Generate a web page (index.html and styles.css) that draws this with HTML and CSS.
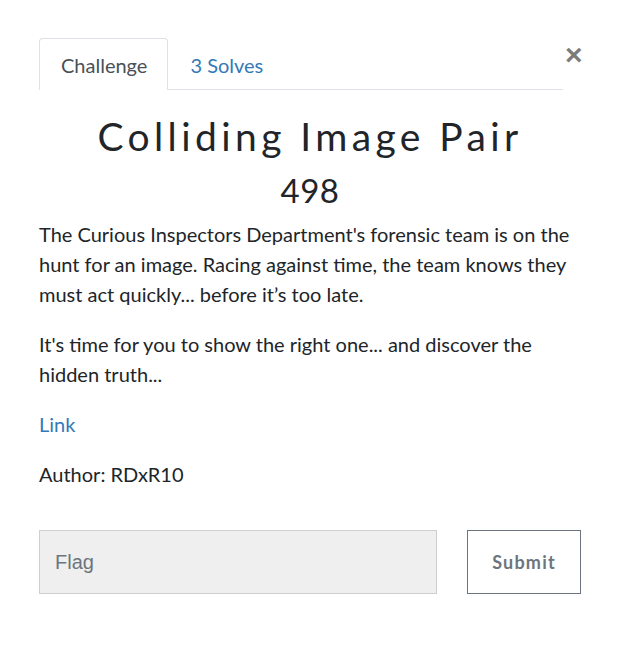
FILE: index.html
```html
<!DOCTYPE html>
<html lang="en">
<head>
<meta charset="utf-8">
<title>Colliding Image Pair</title>
<link rel="stylesheet" href="styles.css">
</head>
<body>
<div class="modal">
  <div class="modal-head">
    <ul class="tabs">
      <li class="tab active">Challenge</li>
      <li class="tab link">3 Solves</li>
    </ul>
    <button class="close" aria-label="Close">&times;</button>
  </div>
  <h2 class="title">Colliding Image Pair</h2>
  <div class="value">498</div>
  <div class="desc">
    <p>The Curious Inspectors Department's forensic team is on the hunt for an image. Racing against time, the team knows they must act quickly... before it’s too late.</p>
    <p>It's time for you to show the right one... and discover the hidden truth...</p>
    <p><a href="#" class="ext">Link</a></p>
    <p>Author: RDxR10</p>
  </div>
  <form class="flag-form">
    <input class="flag-input" type="text" placeholder="Flag">
    <button type="button" class="submit">Submit</button>
  </form>
</div>
</body>
</html>
```

FILE: styles.css
```css
html, body {
  margin: 0;
  padding: 0;
  background: #ffffff;
}
body {
  font-family: Lato, "Open Sans", sans-serif;
  color: #212529;
}
.modal {
  width: 542px;
  padding: 38px 0 0 39px;
}
.modal-head {
  display: flex;
  align-items: flex-start;
}
.tabs {
  list-style: none;
  margin: 0;
  padding: 0;
  display: flex;
  width: 525px;
  border-bottom: 1px solid #dee2e6;
}
.tab {
  height: 50px;
  line-height: 52px;
  font-size: 20px;
  padding: 0 20px 0 21px;
  border: 1px solid transparent;
  border-bottom: none;
  border-radius: 4px 4px 0 0;
  margin-bottom: -1px;
  background: #fff;
}
.tab.active {
  color: #495057;
  border-color: #dee2e6;
  height: 51px;
}
.tab.link {
  color: #337ab7;
}
.close {
  margin-left: 2px;
  margin-top: 2px;
  background: none;
  border: none;
  padding: 0;
  width: 16px;
  font-family: "Liberation Sans", Arial, sans-serif;
  font-size: 30px;
  font-weight: bold;
  line-height: 30px;
  color: #7b7b7b;
  cursor: pointer;
}
.title {
  margin: 22px 0 0;
  text-align: center;
  font-family: Lato, sans-serif;
  font-weight: 400;
  font-size: 39px;
  letter-spacing: 4.4px;
  line-height: 48px;
  color: #212529;
}
.value {
  text-align: center;
  font-size: 33px;
  letter-spacing: 0.5px;
  line-height: 40px;
  margin-top: 10px;
  color: #212529;
}
.desc {
  margin-top: 9px;
  font-size: 20px;
  line-height: 30px;
}
.desc p {
  margin: 0 0 20px;
}
.ext {
  color: #337ab7;
  text-decoration: none;
}
.flag-form {
  display: flex;
  gap: 30px;
  margin-top: 41px;
}
.flag-input {
  box-sizing: border-box;
  width: 398px;
  height: 64px;
  padding: 0 15px;
  background: #efefef;
  border: 1px solid #cfcfcf;
  font-family: "Liberation Sans", Arial, sans-serif;
  font-size: 20px;
  color: #495057;
  outline: none;
  margin: 0;
}
.flag-input::placeholder {
  color: #6c757d;
}
.submit {
  box-sizing: border-box;
  width: 114px;
  height: 64px;
  background: #fff;
  border: 1px solid #6c757d;
  font-family: Lato, sans-serif;
  font-weight: 700;
  font-size: 18px;
  letter-spacing: 1.2px;
  color: #6c757d;
  margin: 0;
  padding: 0;
}
```
